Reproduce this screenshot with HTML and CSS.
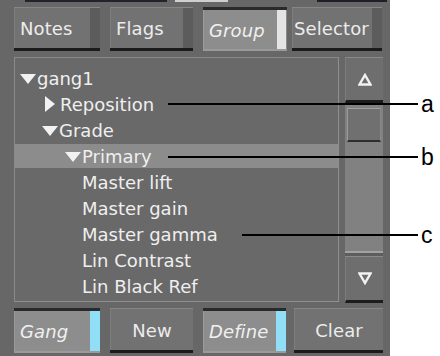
FILE: index.html
```html
<!DOCTYPE html>
<html>
<head>
<meta charset="utf-8">
<link rel="stylesheet" href="styles.css">
</head>
<body>
<div class="app">
  <div class="strip">
    <span class="seg seg-a"></span>
    <span class="seg seg-b"></span>
    <span class="seg seg-c"></span>
  </div>
  <div class="btnrow top">
    <div class="btn w-notes"><div class="face"><span class="lbl">Notes</span><span class="ind"></span></div></div>
    <div class="btn w-flags"><div class="face"><span class="lbl">Flags</span><span class="ind"></span></div></div>
    <div class="btn on w-group"><div class="face"><span class="lbl it">Group</span><span class="ind white"></span></div></div>
    <div class="btn w-sel"><div class="face"><span class="lbl tight">Selector</span><span class="ind"></span></div></div>
  </div>
  <div class="middle">
    <div class="panel">
      <div class="row l0"><span class="tri down"></span><span class="txt">gang1</span></div>
      <div class="row l1"><span class="tri right"></span><span class="txt">Reposition</span></div>
      <div class="row l1"><span class="tri down"></span><span class="txt">Grade</span></div>
      <div class="row l2 sel"><span class="tri down"></span><span class="txt">Primary</span></div>
      <div class="row l3"><span class="txt">Master lift</span></div>
      <div class="row l3"><span class="txt">Master gain</span></div>
      <div class="row l3"><span class="txt">Master gamma</span></div>
      <div class="row l3"><span class="txt">Lin Contrast</span></div>
      <div class="row l3"><span class="txt">Lin Black Ref</span></div>
    </div>
    <div class="scroll">
      <div class="sbtn up">
        <svg width="14" height="13" viewBox="0 0 14 13"><path d="M7 2 L12.5 11.5 L1.5 11.5 Z" fill="none" stroke="#f2f2f2" stroke-width="2.4" stroke-linejoin="miter"/></svg>
      </div>
      <div class="track"><div class="thumb"></div></div>
      <div class="sbtn down">
        <svg width="14" height="13" viewBox="0 0 14 13"><path d="M1.5 1.5 L12.5 1.5 L7 11 Z" fill="none" stroke="#f2f2f2" stroke-width="2.4" stroke-linejoin="miter"/></svg>
      </div>
    </div>
  </div>
  <div class="btnrow bottom">
    <div class="btn on w-gang"><div class="face"><span class="lbl it">Gang</span><span class="ind cyan"></span></div></div>
    <div class="btn w-new"><div class="face"><span class="lbl center">New</span></div></div>
    <div class="btn on w-def"><div class="face"><span class="lbl it">Define</span><span class="ind cyan"></span></div></div>
    <div class="btn w-clear"><div class="face"><span class="lbl center">Clear</span></div></div>
  </div>
</div>
<div class="callout ca"><span class="line"></span><span class="tag">a</span></div>
<div class="callout cb"><span class="line"></span><span class="tag">b</span></div>
<div class="callout cc"><span class="line"></span><span class="tag">c</span></div>
</body>
</html>
```
FILE: styles.css
```css
html, body {
  margin: 0;
  padding: 0;
  background: #ffffff;
}
body {
  width: 440px;
  height: 356px;
  position: relative;
  overflow: hidden;
  font-family: "DejaVu Sans", sans-serif;
}
.app {
  width: 390px;
  height: 356px;
  background: #676767;
  display: flex;
  flex-direction: column;
}
.strip {
  height: 3px;
  display: flex;
}
.seg { display: block; height: 2px; }
.seg-a { margin-left: 25px; width: 142px; background: #23232e; }
.seg-b { margin-left: 8px; width: 53px; background: #cfcfcf; }
.seg-c { margin-left: 89px; width: 70px; background: #1f1f2c; }

.btnrow {
  display: flex;
  padding-left: 14px;
  gap: 10px;
  height: 44px;
}
.btnrow.top { margin-top: 4px; }
.btnrow.bottom { margin-top: 5px; height: 45px; }

.w-notes { width: 86px; }
.w-flags { width: 83px; }
.w-group { width: 84px; }
.w-sel { width: 90px; margin-left: -5px; }
.w-gang { width: 86px; }
.w-new { width: 83px; }
.w-def { width: 83px; }
.w-clear { width: 89px; margin-left: -2px; }

.btn {
  display: flex;
  flex-direction: column;
  box-sizing: border-box;
  border-bottom: 3px solid #1b1b1b;
}
.btn .face {
  flex: 1;
  display: flex;
  background: #727272;
  border-top: 1px solid #868686;
  border-left: 1px solid #7e7e7e;
}
.btn.on {
  border-bottom: 2px solid #9a9a9a;
  border-top: 3px solid #2a2a2a;
}
.btn.on .face {
  background: #8d8d8d;
  border-top: none;
  border-left: 1px solid #9a9a9a;
}
.lbl {
  flex: 1;
  display: flex;
  align-items: center;
  padding-left: 5px;
  padding-top: 1px;
  color: #ececec;
  font-size: 18px;
  letter-spacing: 0.1px;
  white-space: nowrap;
}
.lbl.tight { padding-left: 1px; }
.lbl.center { justify-content: center; padding-left: 0; }
.lbl.it { font-style: italic; color: #f0f0f0; }
.ind {
  width: 10px;
  background: #5c5c5c;
}
.ind.white { background: #e4e4e4; width: 9px; margin-right: 1px; }
.ind.cyan { background: #90dff6; }

.middle {
  display: flex;
  padding-left: 14px;
  margin-top: 6px;
  height: 246px;
}
.panel {
  width: 325px;
  height: 245px;
  box-sizing: border-box;
  border: 1px solid #8a8a8a;
  border-right-color: #8f8f8f;
  border-bottom-color: #8f8f8f;
  background: #696969;
  padding-top: 7px;
  display: flex;
  flex-direction: column;
}
.row {
  height: 26px;
  display: flex;
  align-items: center;
  color: #efefef;
  font-size: 18px;
  white-space: nowrap;
}
.row.sel { background: #8c8c8c; height: 24px; margin: 1px 0; }
.row.l0 { padding-left: 5px; }
.row.l1 { padding-left: 27px; }
.row.l2 { padding-left: 50px; }
.row.l3 { padding-left: 67px; }
.tri {
  display: block;
  width: 0;
  height: 0;
  margin-right: 1px;
}
.tri.down {
  border-left: 8px solid transparent;
  border-right: 8px solid transparent;
  border-top: 10px solid #f2f2f2;
  margin-top: 2px;
}
.tri.right {
  border-top: 8px solid transparent;
  border-bottom: 8px solid transparent;
  border-left: 10px solid #f2f2f2;
  margin-left: 3px;
  margin-right: 5px;
}
.txt { display: block; }

.scroll {
  margin-left: 6px;
  width: 38px;
  height: 246px;
  display: flex;
  flex-direction: column;
  background: #5d5d5d;
}
.sbtn {
  box-sizing: border-box;
  display: flex;
  align-items: center;
  justify-content: center;
  background: #6e6e6e;
  border-top: 1px solid #8a8a8a;
  border-left: 1px solid #7c7c7c;
  border-bottom: 3px solid #1d1d1d;
}
.sbtn.up { height: 46px; }
.sbtn.down { height: 47px; margin-top: 3px; }
.track {
  height: 150px;
  box-sizing: border-box;
  background: #818181;
  border-top: 2px solid #9a9a9a;
  border-bottom: 2px solid #a2a2a2;
  padding: 3px 2px 0 2px;
}
.thumb {
  height: 34px;
  box-sizing: border-box;
  background: #707070;
  border-top: 1px solid #a0a0a0;
  border-left: 1px solid #9a9a9a;
  border-right: 1px solid #8a8a8a;
  border-bottom: 2px solid #2e2e2e;
}

.callout {
  position: absolute;
  display: flex;
  align-items: center;
  height: 24px;
}
.callout .line {
  display: block;
  height: 2px;
  background: #000;
}
.callout .tag {
  font-family: "Liberation Sans", Arial, sans-serif;
  font-size: 23px;
  color: #000;
  margin-left: 3px;
  line-height: 24px;
}
.ca { left: 168px; top: 92px; }
.ca .line { width: 250px; }
.cb { left: 168px; top: 145px; }
.cb .line { width: 250px; }
.cc { left: 242px; top: 223px; }
.cc .line { width: 176px; }
```
